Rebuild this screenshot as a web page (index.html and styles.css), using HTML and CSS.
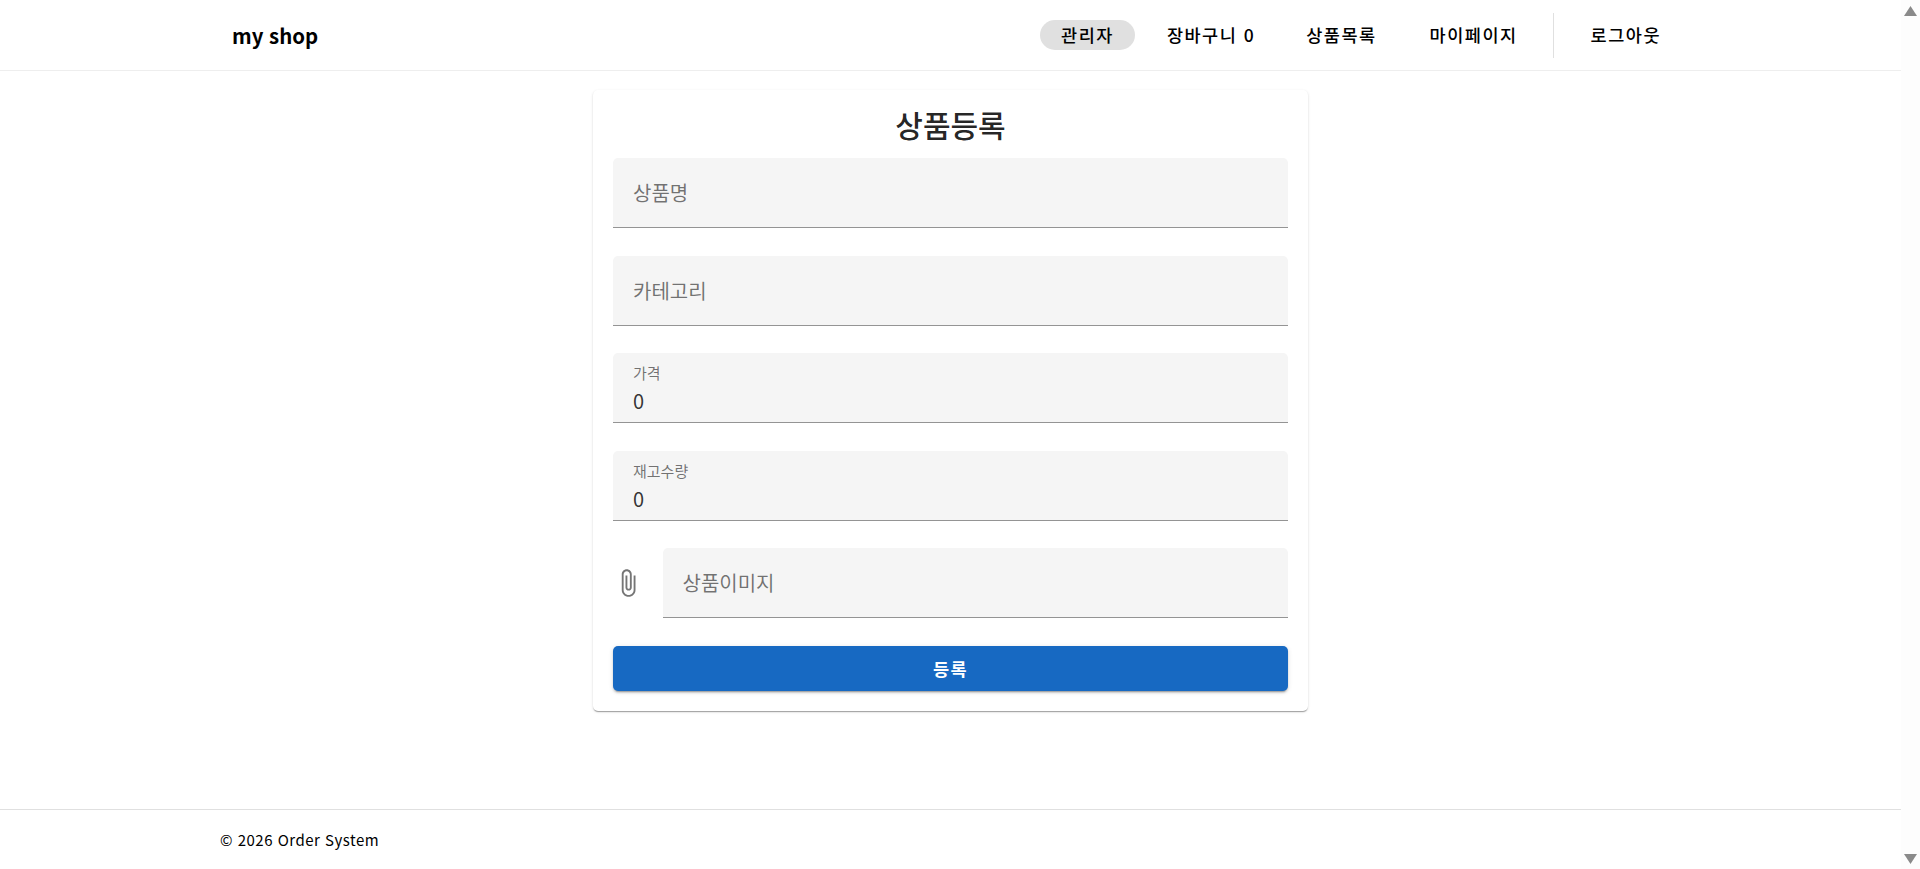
FILE: index.html
```html
<!DOCTYPE html>
<html lang="ko">
<head>
  <meta charset="UTF-8" />
  <meta name="viewport" content="width=device-width, initial-scale=1" />
  <title>my shop - 상품등록</title>
  <link rel="stylesheet" href="styles.css">
</head>
<body>
  <div class="page">
    <header class="header">
      <div class="header-inner">
        <a class="logo" href="#">my shop</a>
        <nav class="nav">
          <a class="nav-link nav-active" href="#">관리자</a>
          <a class="nav-link nav-cart" href="#">장바구니 0</a>
          <a class="nav-link" href="#">상품목록</a>
          <a class="nav-link" href="#">마이페이지</a>
          <span class="nav-divider"></span>
          <a class="nav-link" href="#">로그아웃</a>
        </nav>
      </div>
    </header>

    <main class="content">
      <form class="card">
        <h1 class="card-title">상품등록</h1>

        <div class="field">
          <input type="text" placeholder="상품명" />
        </div>
        <div class="field">
          <input type="text" placeholder="카테고리" />
        </div>
        <div class="field field-filled">
          <label for="price">가격</label>
          <input type="number" id="price" value="0" />
        </div>
        <div class="field field-filled">
          <label for="stock">재고수량</label>
          <input type="number" id="stock" value="0" />
        </div>

        <div class="file-row">
          <svg class="clip-icon" viewBox="0 0 24 24" aria-hidden="true">
            <path d="M16.5 6v11.5c0 2.21-1.79 4-4 4s-4-1.79-4-4V5c0-1.38 1.12-2.5 2.5-2.5s2.5 1.12 2.5 2.5v10.5c0 .55-.45 1-1 1s-1-.45-1-1V6H10v9.5c0 1.38 1.12 2.5 2.5 2.5s2.5-1.12 2.5-2.5V5c0-2.21-1.79-4-4-4S7 2.79 7 5v12.5c0 3.04 2.46 5.5 5.5 5.5s5.5-2.46 5.5-5.5V6h-1.5z"/>
          </svg>
          <div class="field field-file">
            <input type="text" placeholder="상품이미지" />
          </div>
        </div>

        <button class="submit-button" type="submit">등록</button>
      </form>
    </main>

    <footer class="footer">
      <p class="footer-text">© 2026 Order System</p>
    </footer>
  </div>

  <div class="scrollbar">
    <span class="arrow-up"></span>
    <span class="arrow-down"></span>
  </div>
</body>
</html>
```

FILE: styles.css
```css
:root {
  --primary: #1769c2;
  --field-bg: #f5f5f5;
  --label: rgba(0, 0, 0, 0.55);
}

* {
  box-sizing: border-box;
}

html, body {
  height: 100%;
}

body {
  margin: 0;
  display: flex;
  overflow: hidden;
  background: #fff;
  color: #000;
  font-family: "Noto Sans CJK KR", sans-serif;
}

.page {
  flex: 1;
  min-width: 0;
  display: flex;
  flex-direction: column;
}

/* header */
.header {
  height: 71px;
  border-bottom: 1px solid #eee;
}

.header-inner {
  height: 100%;
  width: 1465px;
  margin: 0 auto;
  padding-left: 14px;
  display: flex;
  align-items: center;
  justify-content: space-between;
}

.logo {
  color: #000;
  font-size: 20.4px;
  font-weight: 700;
  text-decoration: none;
}

.nav {
  display: flex;
  align-items: center;
}

.nav-link {
  height: 30px;
  line-height: 30px;
  padding: 0 22px;
  margin-left: 9px;
  border-radius: 15px;
  color: #000;
  font-size: 17.5px;
  font-weight: 500;
  letter-spacing: 1.5px;
  text-decoration: none;
}

.nav-active {
  padding: 0 21px;
  margin-right: 1px;
  background: #e0e0e0;
}

.nav-cart {
  margin-right: -2px;
}

.nav-divider {
  width: 1px;
  height: 45px;
  margin-left: 13px;
  margin-right: 6px;
  background: #e0e0e0;
}

/* form card */
.content {
  flex: 1;
  padding-top: 19px;
}

.card {
  width: 715px;
  margin: 0 auto;
  padding: 20px;
  display: flex;
  flex-direction: column;
  gap: 27.6px;
  background: #fff;
  border-radius: 5px;
  box-shadow: 0 2px 1px -1px rgba(0, 0, 0, 0.2), 0 1px 1px 0 rgba(0, 0, 0, 0.14), 0 1px 3px 0 rgba(0, 0, 0, 0.12);
}

.card-title {
  margin: 0 0 -11.6px;
  height: 32px;
  line-height: 28px;
  text-align: center;
  color: rgba(0, 0, 0, 0.87);
  font-size: 30px;
  font-weight: 500;
}

.field {
  height: 70px;
  padding: 0 20px;
  display: flex;
  flex-direction: column;
  justify-content: center;
  background: var(--field-bg);
  border-bottom: 1px solid #949494;
  border-radius: 5px 5px 0 0;
}

.field input {
  width: 100%;
  padding: 0;
  border: none;
  outline: none;
  background: transparent;
  color: rgba(0, 0, 0, 0.8);
  font-family: "Noto Sans CJK KR", sans-serif;
  font-size: 20px;
}

.field input::placeholder {
  color: var(--label);
  opacity: 1;
}

.field label {
  color: var(--label);
  font-size: 15px;
  line-height: 20px;
}

.field-filled {
  justify-content: flex-start;
  padding-top: 10px;
}

.field-filled input {
  margin-top: 4px;
  line-height: 28px;
}

.file-row {
  display: flex;
  align-items: center;
}

.clip-icon {
  width: 30px;
  height: 30px;
  margin-right: 19.5px;
  fill: rgba(0, 0, 0, 0.54);
}

.field-file {
  flex: 1;
}

.submit-button {
  height: 45px;
  border: none;
  border-radius: 5px;
  background: var(--primary);
  color: #fff;
  font-family: "Noto Sans CJK KR", sans-serif;
  font-size: 17.5px;
  font-weight: 700;
  letter-spacing: 1.5px;
  cursor: pointer;
  box-shadow: 0 3px 1px -2px rgba(0, 0, 0, 0.2), 0 2px 2px 0 rgba(0, 0, 0, 0.14), 0 1px 5px 0 rgba(0, 0, 0, 0.12);
}

/* footer */
.footer {
  height: 60px;
  padding-left: 220px;
  display: flex;
  align-items: center;
  border-top: 1px solid #e0e0e0;
}

.footer-text {
  margin: 0;
  font-size: 15px;
  letter-spacing: 0.5px;
}

/* scrollbar */
.scrollbar {
  width: 19px;
  padding: 6px 3px 5px;
  display: flex;
  flex-direction: column;
  justify-content: space-between;
  background: #fdfdfd;
}

.arrow-up, .arrow-down {
  display: block;
  height: 10px;
  background: #8a8a8a;
}

.arrow-up {
  clip-path: polygon(50% 0, 100% 100%, 0 100%);
}

.arrow-down {
  clip-path: polygon(0 0, 100% 0, 50% 100%);
}
```
